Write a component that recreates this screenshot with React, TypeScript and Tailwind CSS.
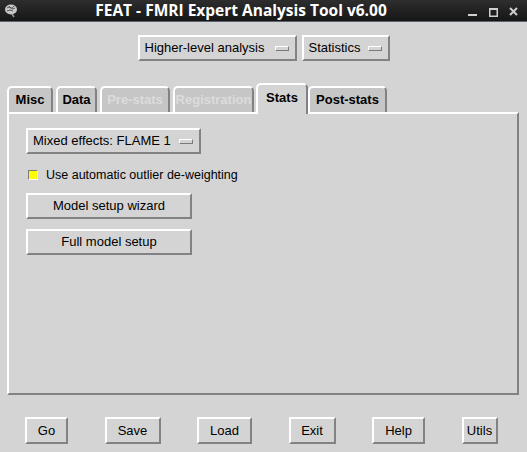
import React from "react";

const raised =
    "border-2 border-t-white border-l-white border-r-[#828282] border-b-[#828282]";

function Indicator() {
    return (
        <div className="w-[14px] h-[5px] bg-[#d4d4d4] border border-t-white border-l-white border-r-[#7a7a7a] border-b-[#7a7a7a]" />
    );
}

function MenuButton({ label, w }: { label: string; w: string }) {
    return (
        <div
            className={`${w} h-[26px] ${raised} flex items-center justify-between pl-[5px] pr-[6px] text-[13px] text-black`}
        >
            <span>{label}</span>
            <Indicator />
        </div>
    );
}

function Button({ label, w, h = "h-[26px]" }: { label: string; w: string; h?: string }) {
    return (
        <div className={`${w} ${h} ${raised} flex items-center justify-center text-[13px] text-black`}>
            {label}
        </div>
    );
}

function Tab({
    label,
    w,
    ml,
    disabled,
}: {
    label: string;
    w: string;
    ml: string;
    disabled?: boolean;
}) {
    return (
        <div
            className={`${w} ${ml} h-[26px] bg-[#c6c6c6] border-t-2 border-l-2 border-r-2 border-t-white border-l-white border-r-[#828282] rounded-tl-[5px] rounded-tr-[5px] flex items-center justify-center text-[13px] font-bold ${
                disabled ? "text-[#dcdcdc]" : "text-black"
            }`}
        >
            {label}
        </div>
    );
}

export default function App() {
    return (
        <div className="w-[527px] h-[452px] bg-[#d4d4d4] flex flex-col font-['Liberation_Sans',Arial,sans-serif] overflow-hidden">
            {/* title bar */}
            <div className="h-[22px] bg-gradient-to-b from-[#2e2e2e] to-[#161616] border-b border-[#5b6470] flex items-center">
                <div className="w-[22px] flex justify-center">
                    <svg width="14" height="15" viewBox="0 0 14 15">
                        <ellipse cx="7" cy="6.5" rx="6" ry="5" fill="#c8c8c8" />
                        <path d="M3 5 Q5 3 7 5 T11 5 M3 8 Q6 6 9 8 M5 3 Q7 7 10 3" stroke="#555" strokeWidth="1" fill="none" />
                        <path d="M8 11 L10 14" stroke="#999" strokeWidth="1.5" />
                    </svg>
                </div>
                <div className="flex-1 text-center text-white font-bold text-[15.5px] font-['Open_Sans','Noto_Sans',sans-serif] leading-none">
                    FEAT - FMRI Expert Analysis Tool v6.00
                </div>
                <div className="w-[67px] flex items-center gap-[11px] pl-[8px]">
                    <svg width="10" height="14" viewBox="0 0 10 14">
                        <rect x="0" y="10" width="9" height="2" fill="#cfcfcf" />
                    </svg>
                    <svg width="9" height="14" viewBox="0 0 9 14">
                        <rect x="0.75" y="4.75" width="7.5" height="7.5" stroke="#cfcfcf" strokeWidth="1.5" fill="none" />
                        <rect x="0" y="4" width="9" height="2" fill="#cfcfcf" />
                    </svg>
                    <svg width="9" height="14" viewBox="0 0 9 14">
                        <path d="M1 4 L8 11 M8 4 L1 11" stroke="#cfcfcf" strokeWidth="2" />
                    </svg>
                </div>
            </div>

            {/* top menus */}
            <div className="mt-[13px] flex justify-center gap-[5px]">
                <MenuButton label="Higher-level analysis" w="w-[159px]" />
                <MenuButton label="Statistics" w="w-[88px]" />
            </div>

            {/* tabs */}
            <div className="mt-[22px] h-[29px] flex items-end">
                <Tab label="Misc" w="w-[46px]" ml="ml-[7px]" />
                <Tab label="Data" w="w-[41px]" ml="ml-[3px]" />
                <Tab label="Pre-stats" w="w-[70px]" ml="ml-[3px]" disabled />
                <Tab label="Registration" w="w-[81px]" ml="ml-[3px]" disabled />
                <div className="relative z-10 ml-[2px] w-[52px] h-[31px] -mb-[2px] bg-[#d4d4d4] border-t-2 border-l-2 border-r-2 border-t-white border-l-white border-r-[#828282] rounded-tl-[5px] rounded-tr-[5px] flex items-center justify-center text-[13px] font-bold text-black pb-[4px]">
                    Stats
                </div>
                <Tab label="Post-stats" w="w-[79px]" ml="ml-0" />
            </div>

            {/* panel */}
            <div className={`ml-[7px] w-[512px] h-[283px] ${raised} pt-[14px] pl-[17px] flex flex-col`}>
                <MenuButton label="Mixed effects: FLAME 1" w="w-[175px] h-[25px]" />
                <div className="mt-[14px] h-[14px] flex items-center">
                    <div className="ml-[2px] w-[10px] h-[10px] bg-[#ffff00] border border-t-[#7a7a7a] border-l-[#7a7a7a] border-r-white border-b-white" />
                    <span className="ml-[8px] text-[12.5px] text-black">
                        Use automatic outlier de-weighting
                    </span>
                </div>
                <div className="mt-[11px]">
                    <Button label="Model setup wizard" w="w-[166px]" />
                </div>
                <div className="mt-[10px]">
                    <Button label="Full model setup" w="w-[166px]" />
                </div>
            </div>

            {/* bottom buttons */}
            <div className="mt-[22px] pl-[25px] flex gap-[36.5px]">
                <Button label="Go" w="w-[43px]" h="h-[27px]" />
                <Button label="Save" w="w-[56px]" h="h-[27px]" />
                <Button label="Load" w="w-[55px]" h="h-[27px]" />
                <Button label="Exit" w="w-[47px]" h="h-[27px]" />
                <Button label="Help" w="w-[53px]" h="h-[27px]" />
                <Button label="Utils" w="w-[36px]" h="h-[27px]" />
            </div>
        </div>
    );
}
